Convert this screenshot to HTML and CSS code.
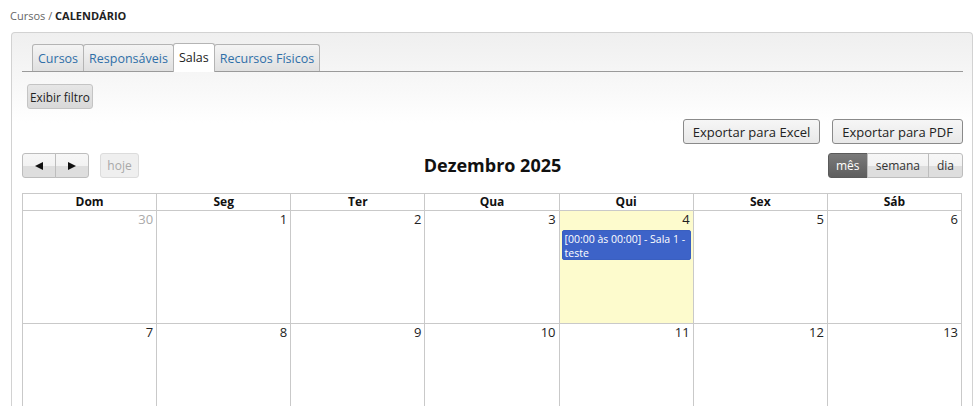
FILE: index.html
```html
<!DOCTYPE html>
<html lang="pt-BR">
<head>
<meta charset="utf-8">
<title>Calendário</title>
<link rel="stylesheet" href="styles.css">
</head>
<body>
<div class="breadcrumb"><span class="crumb">Cursos</span> / <strong>CALENDÁRIO</strong></div>
<div class="panel">
  <ul class="tabs">
    <li class="tab">Cursos</li>
    <li class="tab">Responsáveis</li>
    <li class="tab active">Salas</li>
    <li class="tab">Recursos Físicos</li>
  </ul>
  <div class="filter-row"><button class="btn-filter">Exibir filtro</button></div>
  <div class="export-row">
    <button class="btn-export">Exportar para Excel</button>
    <button class="btn-export">Exportar para PDF</button>
  </div>
  <div class="toolbar">
    <div class="tb-left">
      <div class="group">
        <button class="fc-btn arrow"><svg width="10" height="10" viewBox="0 0 10 10"><path d="M1 5 L9 1 L9 9 Z" fill="#111"/></svg></button><button class="fc-btn arrow"><svg width="10" height="10" viewBox="0 0 10 10"><path d="M9 5 L1 1 L1 9 Z" fill="#111"/></svg></button>
      </div>
      <button class="fc-btn today">hoje</button>
    </div>
    <h2 class="title">Dezembro 2025</h2>
    <div class="tb-right">
      <div class="group">
        <button class="fc-btn view active">mês</button><button class="fc-btn view">semana</button><button class="fc-btn view">dia</button>
      </div>
    </div>
  </div>
  <table class="cal">
    <thead>
      <tr><th>Dom</th><th>Seg</th><th>Ter</th><th>Qua</th><th>Qui</th><th>Sex</th><th>Sáb</th></tr>
    </thead>
    <tbody>
      <tr>
        <td><div class="num other">30</div></td>
        <td><div class="num">1</div></td>
        <td><div class="num">2</div></td>
        <td><div class="num">3</div></td>
        <td class="today-cell"><div class="num">4</div><div class="event">[00:00 às 00:00] - Sala 1 - teste</div></td>
        <td><div class="num">5</div></td>
        <td><div class="num">6</div></td>
      </tr>
      <tr>
        <td><div class="num">7</div></td>
        <td><div class="num">8</div></td>
        <td><div class="num">9</div></td>
        <td><div class="num">10</div></td>
        <td><div class="num">11</div></td>
        <td><div class="num">12</div></td>
        <td><div class="num">13</div></td>
      </tr>
    </tbody>
  </table>
</div>
</body>
</html>
```
FILE: styles.css
```css
html, body {
  margin: 0;
  padding: 0;
  background: #fff;
  font-family: "Open Sans", "DejaVu Sans", sans-serif;
  color: #222;
  overflow: hidden;
}

.breadcrumb {
  font-size: 11px;
  line-height: 16px;
  padding: 8px 10px 8px 10px;
  color: #666;
}
.breadcrumb strong {
  color: #222;
  font-weight: 700;
}

.panel {
  margin: 0 4px 0 11px;
  border: 1px solid #d2d2d2;
  border-bottom: none;
  border-radius: 4px 4px 0 0;
  background: linear-gradient(to bottom, #efefef 0px, #fbfbfb 70px, #ffffff 90px);
  padding: 10px 9px 0 10px;
  height: 363px;
  overflow: hidden;
}

.tabs {
  list-style: none;
  margin: 0;
  padding: 0 0 0 10px;
  display: flex;
  border-bottom: 1px solid #9a9a9a;
  height: 28px;
}
.tab {
  height: 27px;
  box-sizing: border-box;
  border: 1px solid #b4b4b4;
  border-bottom: none;
  border-radius: 3px 3px 0 0;
  background: linear-gradient(to bottom, #f4f4f4, #e0e0e0);
  color: #2f6fa8;
  font-size: 12.5px;
  line-height: 27px;
  padding: 0 5px;
  margin-top: 1px;
  margin-right: -1px;
}
.tab.active {
  background: #fff;
  color: #222;
  height: 29px;
  margin-top: 0;
  line-height: 28px;
  position: relative;
  z-index: 1;
}

.filter-row {
  padding: 12px 0 0 5px;
}
button {
  font-family: "Open Sans", "DejaVu Sans", sans-serif;
  cursor: pointer;
}
.btn-filter {
  height: 25px;
  font-size: 11.8px;
  padding: 0 2px;
  background: linear-gradient(to bottom, #e6e6e6, #d9d9d9);
  border: 1px solid #c4c4c4;
  border-radius: 3px;
  color: #222;
}

.export-row {
  display: flex;
  justify-content: flex-end;
  gap: 12px;
  margin-top: 10px;
}
.btn-export {
  height: 25px;
  font-size: 13px;
  padding: 0 9px;
  background: linear-gradient(to bottom, #f6f6f6, #e8e8e8);
  border: 1px solid #8a8a8a;
  border-radius: 3px;
  color: #222;
}

.toolbar {
  display: flex;
  align-items: center;
  justify-content: space-between;
  margin-top: 9px;
  height: 25px;
}
.tb-left, .tb-right {
  display: flex;
  align-items: center;
  width: 200px;
}
.tb-right {
  justify-content: flex-end;
}
.group {
  display: flex;
}
.fc-btn {
  height: 25px;
  box-sizing: border-box;
  border: 1px solid #bdbdbd;
  background: linear-gradient(to bottom, #f7f7f7 0%, #f2f2f2 50%, #dedede 52%, #dedede 100%);
  font-size: 12px;
  color: #333;
  padding: 0 8px;
  margin: 0;
}
.fc-btn.arrow {
  width: 34px;
  display: flex;
  align-items: center;
  justify-content: center;
}
.fc-btn.arrow + .fc-btn.arrow {
  margin-left: -1px;
  width: 34px;
}
.group .fc-btn:first-child {
  border-radius: 3px 0 0 3px;
}
.group .fc-btn:last-child {
  border-radius: 0 3px 3px 0;
}
.fc-btn.today {
  margin-left: 11px;
  width: 39px;
  border-radius: 3px;
  color: #a8a8a8;
  border-color: #dcdcdc;
  background: #efefef;
  padding: 0;
}
.fc-btn.view {
  margin-left: -1px;
}
.fc-btn.view:first-child {
  margin-left: 0;
}
.fc-btn.view.active {
  background: linear-gradient(to bottom, #7a7a7a, #5e5e5e);
  border-color: #5a5a5a;
  color: #fff;
  width: 40px;
  padding: 0;
}
.title {
  margin: 0;
  font-size: 18px;
  font-weight: 700;
  color: #111;
  line-height: 25px;
}

.cal {
  margin-top: 15px;
  width: 940px;
  border-collapse: collapse;
  table-layout: fixed;
  background: #fff;
}
.cal th {
  border: 1px solid #c9c9c9;
  font-size: 12px;
  font-weight: 700;
  height: 16px;
  line-height: 16px;
  padding: 0;
  color: #111;
}
.cal td {
  border: 1px solid #c9c9c9;
  height: 112px;
  vertical-align: top;
  padding: 0;
}
.cal td.today-cell {
  background: #fdfbcd;
}
.num {
  text-align: right;
  font-size: 13px;
  line-height: 17px;
  padding: 0 3px 0 0;
  color: #222;
}
.num.other {
  color: #aaa;
}
.event {
  margin: 2px 2px 0 2px;
  background: #3d63c8;
  border: 1px solid #3a5fc0;
  border-radius: 2px;
  color: #fff;
  font-size: 10.5px;
  line-height: 14px;
  padding: 1px 2px 0 2px;
  height: 30px;
  box-sizing: border-box;
  white-space: normal;
}
```
